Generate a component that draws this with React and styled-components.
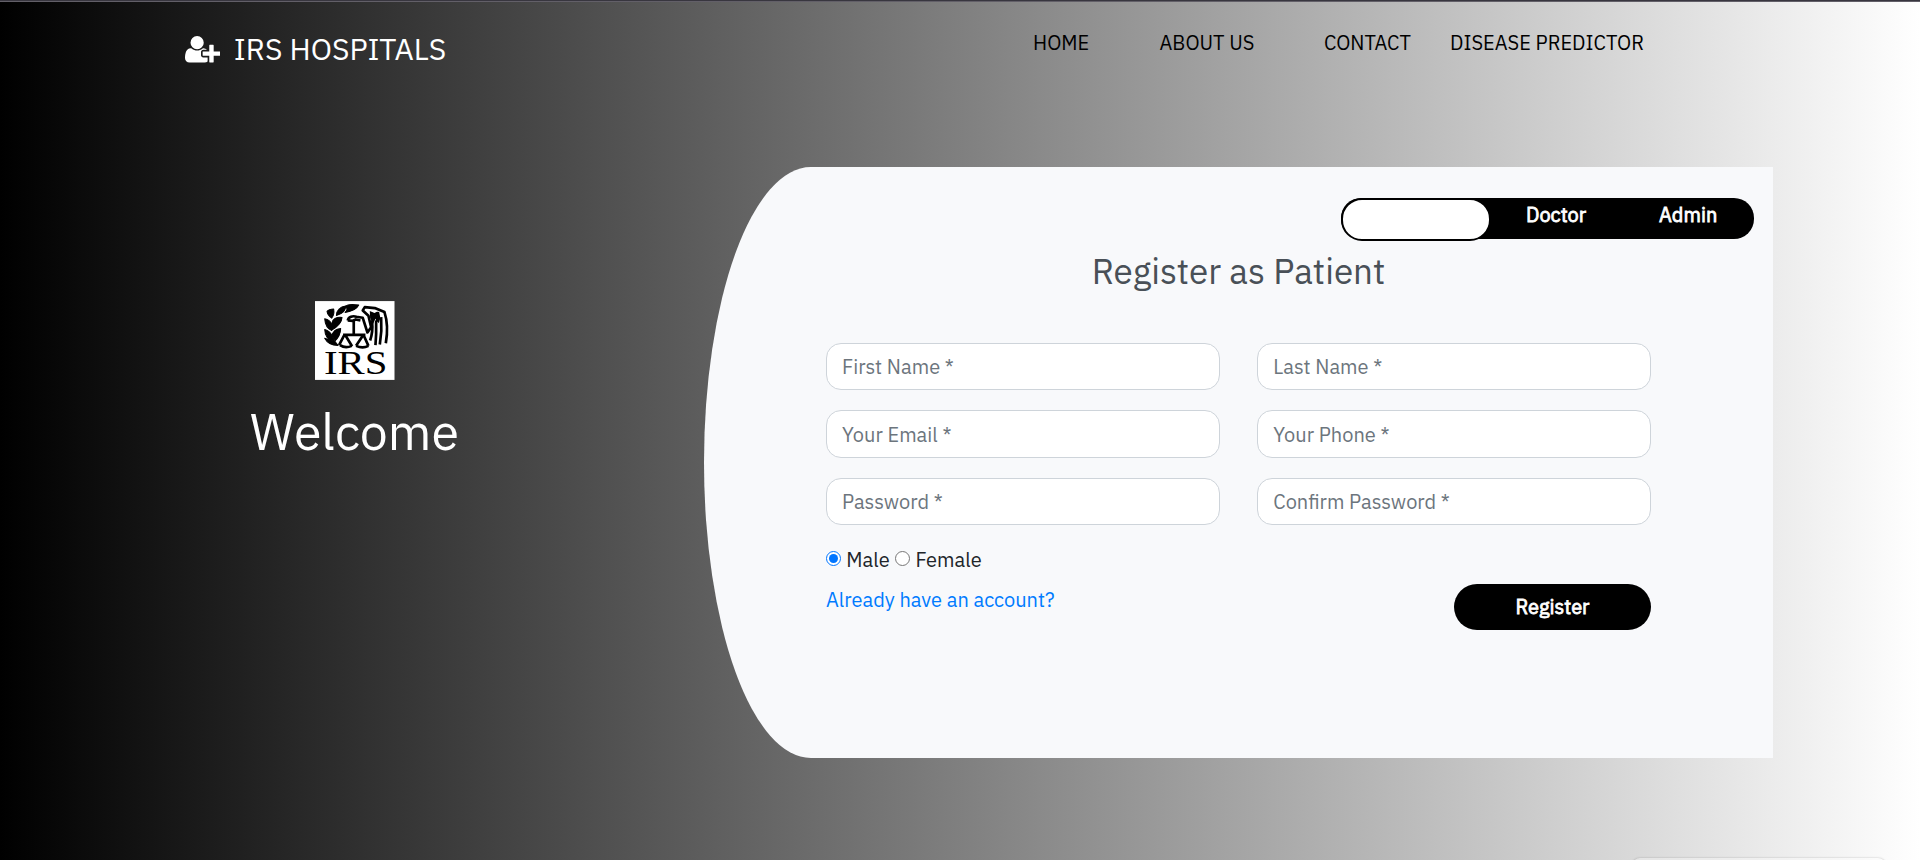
import React, { useState } from "react";
import styled, { createGlobalStyle } from "styled-components";

const GlobalStyle = createGlobalStyle`
  *, *::before, *::after { box-sizing: border-box; }
  body {
    margin: 0;
    font-family: "IBM Plex Sans", Roboto, sans-serif;
    font-size: 20px;
    line-height: 30px;
    color: #212529;
  }
`;

const Page = styled.div`
  position: relative;
  width: 1920px;
  height: 860px;
  overflow: hidden;
  background: linear-gradient(to right, #000, #fff);
`;

const TopEdge = styled.div`
  height: 2px;
  background: #38363f;
  border-bottom: 1px solid #625f68;
`;

const Header = styled.header`
  display: flex;
  height: 165px;
  padding: 26px 0 0 185px;
`;

const Brand = styled.a`
  display: flex;
  align-items: center;
  gap: 13.5px;
  width: 848px;
  height: 43px;
  color: #fff;
  font-size: 30px;
`;

const BrandName = styled.span`
  padding-bottom: 2px;
`;

const Nav = styled.nav`
  display: flex;
  height: 30px;
`;

const NavLink = styled.a`
  width: ${(p) => p.$width}px;
  color: #000;
  white-space: nowrap;
`;

const Main = styled.main`
  display: flex;
`;

const Aside = styled.aside`
  display: flex;
  flex-direction: column;
  align-items: center;
  width: 704px;
  padding: 134px 0 0 5px;
`;

const LogoSvg = styled.svg`
  overflow: visible;
`;

const Welcome = styled.h1`
  margin: 21.5px 0 0;
  color: #fff;
  font-size: 50px;
  font-weight: 400;
  line-height: 60px;
`;

const Panel = styled.section`
  width: 1069px;
  height: 591px;
  padding-top: 31px;
  background: #f8f9fb;
  border-radius: 10% 0 0 10% / 50% 0 0 50%;
`;

const Tabs = styled.div`
  display: flex;
  width: 413px;
  height: 41px;
  margin: 0 19px 0 auto;
  background: #000;
  border-radius: 20px;
`;

const Tab = styled.button`
  flex: none;
  width: ${(p) => (p.$active ? 150 : 133)}px;
  height: ${(p) => (p.$active ? 43 : 34)}px;
  padding: 0 0 0 ${(p) => (p.$active ? 0 : 35)}px;
  border: ${(p) => (p.$active ? "2px solid #000" : "0")};
  border-radius: 21px;
  background: ${(p) => (p.$active ? "#fff" : "transparent")};
  color: #fff;
  font: 400 20px/34px "IBM Plex Sans", Roboto, sans-serif;
  -webkit-text-stroke: 0.8px #fff;
  text-align: left;
`;

const Title = styled.h3`
  margin: 11px 0 50.5px;
  color: #495057;
  font-size: 35px;
  font-weight: 400;
  line-height: 42px;
  text-align: center;
`;

const Form = styled.form`
  padding: 0 122px;
`;

const Fields = styled.div`
  display: grid;
  grid-template-columns: 1fr 1fr;
  gap: 20px 37.5px;
`;

const Field = styled.input`
  width: 100%;
  height: 47.5px;
  padding: 1px 15px 0;
  border: 1px solid #ced4da;
  border-radius: 15px;
  background: #fff;
  color: #495057;
  font: 400 20px/30px "IBM Plex Sans", Roboto, sans-serif;
  outline: none;

  &::placeholder { color: #6c757d; opacity: 1; }
`;

const Choices = styled.div`
  display: flex;
  gap: 5.5px;
  margin-top: 20px;
`;

const Choice = styled.label`
  display: flex;
  align-items: center;
  gap: 5.3px;
  height: 30px;
`;

const Radio = styled.input`
  width: 15px;
  height: 15px;
  margin: 0 0 3px;
`;

const Actions = styled.div`
  display: flex;
  justify-content: space-between;
  align-items: flex-start;
  margin-top: 9px;
`;

const AccountLink = styled.a`
  padding-top: 1px;
  color: #007bff;
`;

const Submit = styled.button`
  width: 197px;
  height: 46px;
  padding: 0;
  border: 0;
  border-radius: 23px;
  background: #000;
  color: #fff;
  font: 400 20px/46px "IBM Plex Sans", Roboto, sans-serif;
  -webkit-text-stroke: 0.8px #fff;
`;

const StatusBubble = styled.div`
  position: absolute;
  top: 858px;
  left: 1632px;
  width: 254px;
  height: 24px;
  border-radius: 8px;
  background: rgba(255, 255, 255, 0.3);
  box-shadow: 0 0 2px rgba(0, 0, 0, 0.25);
`;

function UserPlusIcon() {
  return (
    <svg width="35.3" height="26.5" viewBox="0 128 2048 1536" fill="#fff">
      <path d="M704 896q-159 0-271.5-112.5t-112.5-271.5 112.5-271.5 271.5-112.5 271.5 112.5 112.5 271.5-112.5 271.5-271.5 112.5zM1664 1024h352q13 0 22.5 9.5t9.5 22.5v192q0 13-9.5 22.5t-22.5 9.5h-352v352q0 13-9.5 22.5t-22.5 9.5h-192q-13 0-22.5-9.5t-9.5-22.5v-352h-352q-13 0-22.5-9.5t-9.5-22.5v-192q0-13 9.5-22.5t22.5-9.5h352v-352q0-13 9.5-22.5t22.5-9.5h192q13 0 22.5 9.5t9.5 22.5v352zM928 1248q0 52 38 90t90 38h256v238q-68 50-171 50h-874q-121 0-194-69t-73-190q0-53 3.5-103.5t14-109 26.5-108.5 43-97.5 62-81 85.5-53.5 111.5-20q19 0 39 17 79 61 154.5 91.5t164.5 30.5 164.5-30.5 154.5-91.5q20-17 39-17 132 0 217 96h-223q-52 0-90 38t-38 90v192z" />
    </svg>
  );
}

function IrsLogo() {
  return (
    <LogoSvg width="79.5" height="79" viewBox="0 0 238 236">
      <rect width="238" height="236" fill="#fff" />
      <g fill="#000" stroke="#000" strokeWidth="3" strokeLinejoin="round">
        <path d="M91 16C98 9 112 9 131 12C125 24 112 31 90 34Q101 24 91 16Z" />
        <path d="M64 43C64 27 76 17 92 15C92 29 84 38 64 43Z" />
        <path d="M36 31Q42 24 56 24C58 36 56 44 50 51Q38 43 36 31Z" />
        <path d="M50 67C52 53 65 47 81 49C80 64 72 74 50 87Z" />
        <path d="M29 53Q45 57 49 68L50 88Q31 81 29 53Z" />
        <path d="M51 104C54 88 63 83 77 82C76 99 72 108 60 119Z" />
        <path d="M29 85Q45 90 51 103L58 121Q30 116 29 85Z" />
        <path d="M29 111Q41 114 48 119L59 120L69 133Q40 132 29 111Z" />
      </g>
      <g fill="none" stroke="#000" strokeWidth="8" strokeLinejoin="round">
        <path d="M98 58C100 47 113 43 124 47L143 50L157 94L168 78L160 44L143 28L149 18L179 21L208 33C216 57 218 91 212 126" />
        <path d="M98 58L113 59L122 55L136 58" />
        <path d="M116 58V101M84 101H151M88 101L72 132M90 101L111 135M145 101L123 134M145 101L160 134" />
        <path d="M75 132Q91 143 110 134M123 134Q143 143 160 134" />
        <path d="M168 36L176 49L171 62Q174 91 165 118M188 33L191 48L183 62Q184 99 181 132M198 48Q201 90 194 130" />
      </g>
      <path d="M164 30L178 36L187 31L195 53L191 66L181 53L174 68L165 51Z" fill="#000" />
      <text x="27" y="218" fontFamily='"Liberation Serif", serif' fontSize="104" textLength="190" lengthAdjust="spacingAndGlyphs">
        IRS
      </text>
    </LogoSvg>
  );
}

const links = [
  { label: "HOME", width: 126.5 },
  { label: "ABOUT US", width: 164.5 },
  { label: "CONTACT", width: 126 },
  { label: "DISEASE PREDICTOR", width: 194 },
];

const fields = [
  ["First Name *", "text"],
  ["Last Name *", "text"],
  ["Your Email *", "email"],
  ["Your Phone *", "tel"],
  ["Password *", "password"],
  ["Confirm Password *", "password"],
];

export default function App() {
  const [gender, setGender] = useState("male");
  return (
    <Page>
      <GlobalStyle />
      <TopEdge />
      <Header>
        <Brand>
          <UserPlusIcon />
          <BrandName>IRS HOSPITALS</BrandName>
        </Brand>
        <Nav>
          {links.map((l) => (
            <NavLink key={l.label} $width={l.width}>
              {l.label}
            </NavLink>
          ))}
        </Nav>
      </Header>
      <Main>
        <Aside>
          <IrsLogo />
          <Welcome>Welcome</Welcome>
        </Aside>
        <Panel>
          <Tabs>
            <Tab $active aria-label="Patient" />
            <Tab>Doctor</Tab>
            <Tab>Admin</Tab>
          </Tabs>
          <Title>Register as Patient</Title>
          <Form onSubmit={(e) => e.preventDefault()}>
            <Fields>
              {fields.map(([label, type]) => (
                <Field key={label} type={type} placeholder={label} />
              ))}
            </Fields>
            <Choices>
              <Choice>
                <Radio type="radio" name="gender" checked={gender === "male"} onChange={() => setGender("male")} />
                Male
              </Choice>
              <Choice>
                <Radio type="radio" name="gender" checked={gender === "female"} onChange={() => setGender("female")} />
                Female
              </Choice>
            </Choices>
            <Actions>
              <AccountLink>Already have an account?</AccountLink>
              <Submit type="submit">Register</Submit>
            </Actions>
          </Form>
        </Panel>
      </Main>
      <StatusBubble />
    </Page>
  );
}
